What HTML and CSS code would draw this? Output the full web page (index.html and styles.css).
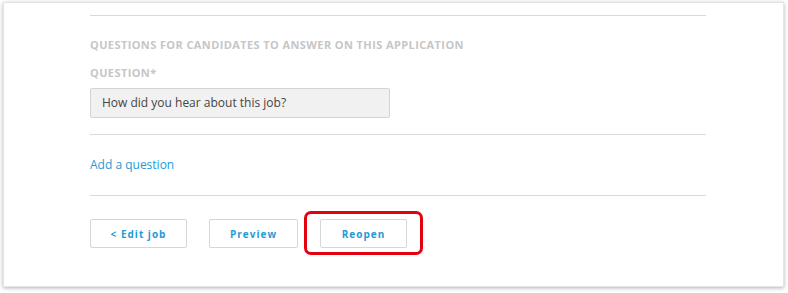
FILE: index.html
```html
<!DOCTYPE html>
<html lang="en">
<head>
    <meta charset="UTF-8">
    <title>Job questions</title>
    <link rel="stylesheet" href="styles.css">
</head>
<body>
    <div class="window">
        <div class="content">
            <hr class="divider first">

            <div class="section-title">Questions for candidates to answer on this application</div>

            <div class="field">
                <label>Question*</label>
                <div class="question-box">How did you hear about this job?</div>
            </div>

            <hr class="divider">

            <a class="add-link" href="#">Add a question</a>

            <hr class="divider">

            <div class="actions">
                <button class="btn btn-edit">&lt; Edit job</button>
                <button class="btn btn-preview">Preview</button>
                <div class="highlight">
                    <button class="btn btn-reopen">Reopen</button>
                    <span class="highlight-ring"></span>
                </div>
            </div>
        </div>
    </div>
</body>
</html>
```

FILE: styles.css
```css
:root {
    --text-dim: #c6c6c6;
    --text-main: #454545;
    --blue: #1f9ad6;
    --line: #d9d9d9;
}

body {
    margin: 0;
    background: #ffffff;
    font-family: 'Open Sans', sans-serif;
}

.window {
    margin: 2px 4px 6px 3px;
    height: 285px;
    background: #fff;
    border: 1px solid #e4e4e4;
    box-shadow: 0 1px 4px rgba(0, 0, 0, 0.3);
    box-sizing: border-box;
}

.content {
    width: 616px;
    margin-left: 86px;
    padding-top: 12px;
}

.divider {
    border: none;
    border-top: 1px solid var(--line);
    margin: 0;
}

.section-title {
    margin-top: 21px;
    font-size: 11px;
    line-height: 16px;
    font-weight: bold;
    text-transform: uppercase;
    letter-spacing: 0.4px;
    color: var(--text-dim);
}

.field {
    margin-top: 12px;
    margin-bottom: 16px;
}

label {
    display: block;
    font-size: 11px;
    line-height: 16px;
    font-weight: bold;
    text-transform: uppercase;
    letter-spacing: 0.4px;
    color: var(--text-dim);
    margin-bottom: 7px;
}

.question-box {
    width: 300px;
    height: 30px;
    box-sizing: border-box;
    padding: 0 11px;
    background: #f1f1f1;
    border: 1px solid #d4d4d4;
    border-radius: 2px;
    font-size: 12px;
    line-height: 28px;
    color: var(--text-main);
}

.add-link {
    display: block;
    margin: 21px 0;
    font-size: 12px;
    line-height: 18px;
    color: var(--blue);
    text-decoration: none;
}

.actions {
    display: flex;
    gap: 22px;
    margin-top: 23px;
}

.btn {
    height: 29px;
    box-sizing: border-box;
    background: #fff;
    border: 1px solid #d6d6d6;
    border-radius: 2px;
    font-family: 'Open Sans', sans-serif;
    font-size: 10px;
    font-weight: bold;
    letter-spacing: 1px;
    color: var(--blue);
    padding: 0;
    cursor: pointer;
}

.btn-edit {
    width: 97px;
}

.btn-preview {
    width: 89px;
}

.btn-reopen {
    width: 87px;
}

.highlight {
    position: relative;
    display: flex;
}

.highlight-ring {
    position: absolute;
    left: -16px;
    right: -16px;
    top: -8px;
    bottom: -7px;
    border: 3px solid #e3000f;
    border-radius: 7px;
}
```
